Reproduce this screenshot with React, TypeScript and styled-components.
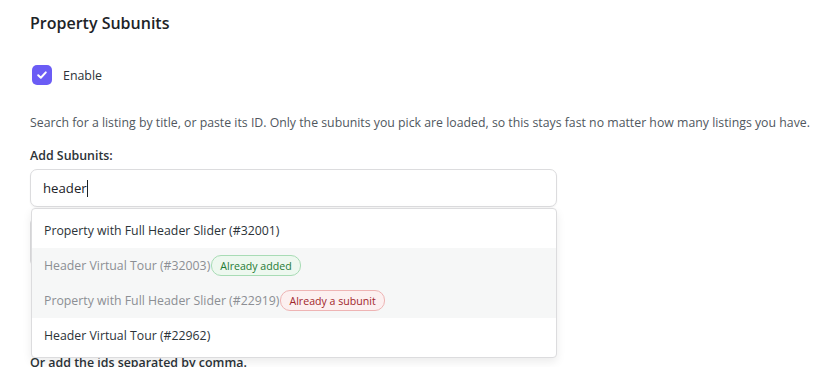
import React from 'react';
import styled, { createGlobalStyle } from 'styled-components';

const GlobalStyle = createGlobalStyle`
  html, body {
    margin: 0;
    padding: 0;
    background: #ffffff;
  }
  body {
    font-family: "Open Sans", "Noto Sans", "Liberation Sans", sans-serif;
    color: #2c3338;
    overflow: hidden;
  }
`;

const Page = styled.div`
  padding: 12px 30px 0;
  width: 832px;
  height: 367px;
  box-sizing: border-box;
`;

const Title = styled.h2`
  margin: 0;
  font-size: 16px;
  font-weight: 600;
  line-height: 22px;
  color: #1d2327;
`;

const CheckRow = styled.label`
  display: flex;
  align-items: center;
  gap: 11px;
  margin-top: 31px;
  padding-left: 2px;
  font-size: 12.4px;
  font-weight: 500;
  color: #2c3338;
`;

const CheckBox = styled.span`
  width: 20px;
  height: 20px;
  border-radius: 5px;
  background: #6b5cf5;
  display: flex;
  align-items: center;
  justify-content: center;
`;

const Description = styled.p`
  margin: 28px 0 0;
  font-size: 12.3px;
  line-height: 20px;
  color: #50575e;
  white-space: nowrap;
`;

const FieldLabel = styled.div`
  margin-top: 13px;
  font-size: 12.4px;
  font-weight: 600;
  line-height: 20px;
  color: #2c3338;
`;

const Field = styled.div`
  position: relative;
  width: 527px;
  margin-top: 3px;
`;

const SearchInput = styled.div`
  height: 38px;
  box-sizing: border-box;
  border: 1px solid #dcdcde;
  border-radius: 7px;
  padding: 0 12px;
  display: flex;
  align-items: center;
  font-size: 13.2px;
  color: #1d2327;
  background: #fff;
  box-shadow: 0 1px 2px rgba(0, 0, 0, 0.05);
`;

const Caret = styled.span`
  display: inline-block;
  width: 1px;
  height: 17px;
  background: #1d2327;
`;

const Dropdown = styled.ul`
  position: absolute;
  top: 39px;
  left: 1px;
  right: 0;
  margin: 0;
  padding: 4px 0;
  list-style: none;
  background: #fff;
  border: 1px solid #dcdcde;
  border-radius: 4px;
  box-shadow: 0 4px 10px rgba(0, 0, 0, 0.08);
  z-index: 2;
`;

const Option = styled.li<{ $disabled?: boolean }>`
  height: 35px;
  display: flex;
  align-items: center;
  padding: 0 12px;
  font-size: 12.3px;
  color: ${(p) => (p.$disabled ? '#8c8f94' : '#2c3338')};
  background: ${(p) => (p.$disabled ? '#f6f7f7' : '#fff')};
`;

const Badge = styled.span<{ $tone: 'green' | 'red' }>`
  margin-left: 1px;
  padding: 0 8px;
  height: 19px;
  display: inline-flex;
  align-items: center;
  border-radius: 10px;
  font-size: 10.6px;
  border: 1px solid ${(p) => (p.$tone === 'green' ? '#a8dcb5' : '#eeb4b4')};
  background: ${(p) => (p.$tone === 'green' ? '#edf8ef' : '#fcf0f0')};
  color: ${(p) => (p.$tone === 'green' ? '#1e7b34' : '#a1262b')};
`;

const SelectedBox = styled.div`
  margin-top: 12px;
  height: 44px;
  border: 1px solid #dcdcde;
  border-radius: 4px;
`;

const Hint = styled.div`
  margin-top: 89px;
  font-size: 12.4px;
  font-weight: 600;
  line-height: 18px;
  color: #2c3338;
`;

type Item = { title: string; id: string; badge?: { text: string; tone: 'green' | 'red' } };

const items: Item[] = [
  { title: 'Property with Full Header Slider', id: '32001' },
  { title: 'Header Virtual Tour', id: '32003', badge: { text: 'Already added', tone: 'green' } },
  { title: 'Property with Full Header Slider', id: '22919', badge: { text: 'Already a subunit', tone: 'red' } },
  { title: 'Header Virtual Tour', id: '22962' },
];

const App: React.FC = () => {
  return (
    <Page>
      <GlobalStyle />
      <Title>Property Subunits</Title>

      <CheckRow>
        <CheckBox>
          <svg width="12" height="12" viewBox="0 0 12 12" fill="none">
            <path d="M2.2 6.3 4.8 8.8 9.8 3.4" stroke="#fff" strokeWidth="2" strokeLinecap="round" strokeLinejoin="round" />
          </svg>
        </CheckBox>
        Enable
      </CheckRow>

      <Description>
        Search for a listing by title, or paste its ID. Only the subunits you pick are loaded, so this stays fast no matter how many listings you have.
      </Description>

      <FieldLabel>Add Subunits:</FieldLabel>
      <Field>
        <SearchInput>
          header
          <Caret />
        </SearchInput>
        <Dropdown>
          {items.map((it) => (
            <Option key={it.id} $disabled={!!it.badge}>
              {it.title} (#{it.id})
              {it.badge && <Badge $tone={it.badge.tone}>{it.badge.text}</Badge>}
            </Option>
          ))}
        </Dropdown>
        <SelectedBox />
      </Field>
      <Hint>Or add the ids separated by comma.</Hint>
    </Page>
  );
};

export default App;
